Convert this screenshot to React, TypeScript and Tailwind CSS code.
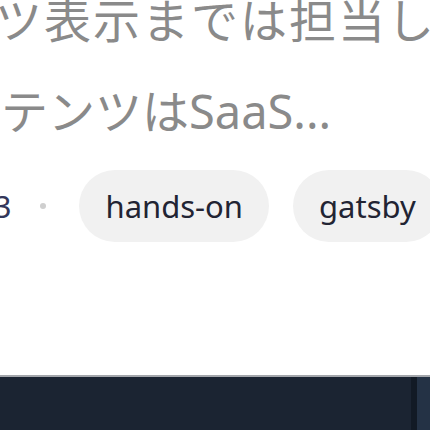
const jp = { fontFamily: '"Noto Sans", "Noto Sans CJK JP", sans-serif' };

const tags = ["hands-on", "gatsby"];

export default function App() {
  return (
    <div className="w-[430px] h-[430px] overflow-hidden bg-white flex flex-col" style={jp}>
      {/* excerpt */}
      <div className="text-[47px] leading-[88px] text-[#8a8a8a] whitespace-nowrap mt-[-24px]">
        <p className="ml-[-5px] tracking-[2px]">ツ表示までは担当し</p>
        <p className="ml-[1px] mt-[3px]">テンツはSaaS...</p>
      </div>

      {/* meta row */}
      <div className="flex items-center whitespace-nowrap mt-[15px] h-[72px]">
        <span className="shrink-0 ml-[-24px] text-[31px] text-[#33375a]">23</span>
        <span className="shrink-0 ml-[29px] w-[6px] h-[6px] rounded-full bg-[#cfcfcf]" />
        <div className="shrink-0 flex gap-[24px] ml-[33px]">
          {tags.map((t) => (
            <span
              key={t}
              className="shrink-0 h-[72px] flex items-center px-[26px] rounded-full bg-[#f1f1f1] text-[31px] text-[#222433]"
            >
              {t}
            </span>
          ))}
        </div>
      </div>

      {/* footer */}
      <div className="mt-auto h-[55px] border-t-2 border-[#a3a6ab] flex">
        <div className="flex-1 bg-[#1b2432]" />
        <div className="w-[6px] bg-[#121a25]" />
        <div className="w-[13px] bg-[#243245]" />
      </div>
    </div>
  );
}
